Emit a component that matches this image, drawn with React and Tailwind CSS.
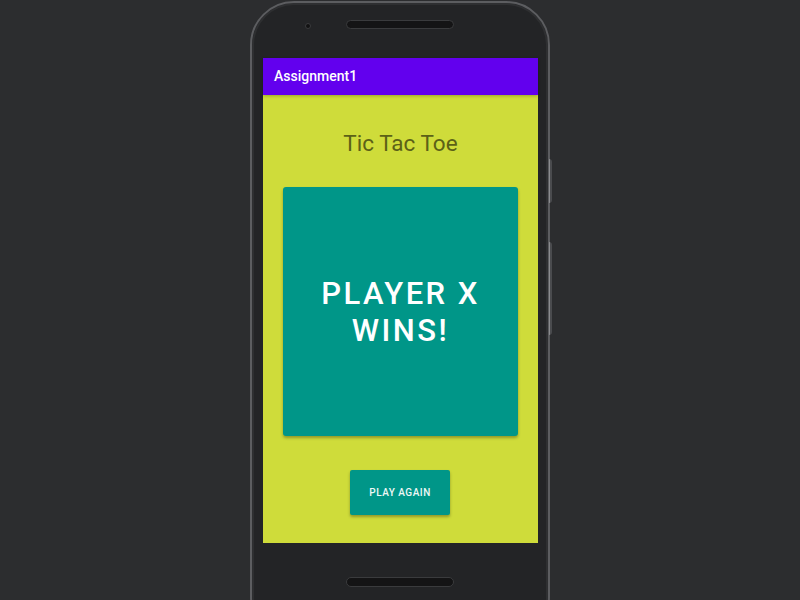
import React from 'react';

const PhoneFrame = ({ children }) => (
  <div className="relative w-[300px] h-[640px] mt-[1px] rounded-[44px] border-2 border-[#5c5d60] bg-[#232426] shadow-[inset_0_0_0_2px_#2e2f31]">
    {/* side buttons */}
    <div className="absolute right-[-4px] top-[156px] w-[3px] h-[44px] rounded-r bg-[#4a4b4e] border-l border-[#8a8b8e]" />
    <div className="absolute right-[-4px] top-[239px] w-[3px] h-[93px] rounded-r bg-[#4a4b4e] border-l border-[#8a8b8e]" />

    <div className="flex flex-col items-center">
      {/* earpiece + camera */}
      <div className="relative h-[55px] w-full flex justify-center items-start pt-[17px]">
        <div className="absolute left-[53px] top-[20px] w-[6px] h-[6px] rounded-full bg-[#121213] border border-[#3a3b3d]" />
        <div className="w-[108px] h-[9px] rounded-full bg-[#141415] border border-[#3a3b3d]" />
      </div>
      {children}
      {/* bottom speaker */}
      <div className="mt-[34px] w-[108px] h-[10px] rounded-full bg-[#141415] border border-[#3a3b3d]" />
    </div>
  </div>
);

export default function App() {
  return (
    <div className="w-[800px] h-[600px] overflow-hidden bg-[#2c2d2f] flex justify-center font-['Roboto',sans-serif]">
      <PhoneFrame>
        <div className="w-[275px] h-[485px] ml-[1px] bg-[#cfdc3a] flex flex-col">
          <div className="h-[37px] bg-[#6200ee] flex items-center px-[11px] shadow-[0_1px_3px_rgba(0,0,0,0.25)]">
            <span className="text-white text-[14px] font-medium">Assignment1</span>
          </div>
          <div className="flex flex-col items-center">
            <h1 className="mt-[33px] text-[22.5px] leading-[30px] text-[#5c6117]">Tic Tac Toe</h1>
            <div className="mt-[29px] w-[235px] h-[249px] rounded-[3px] bg-[#009688] shadow-[0_2px_3px_rgba(0,0,0,0.3)] flex items-center justify-center">
              <p className="text-white text-[31px] leading-[37px] tracking-[0.08em] font-medium text-center">
                PLAYER X<br />WINS!
              </p>
            </div>
            <button className="mt-[34px] ml-[-1px] w-[100px] h-[45px] rounded-[2px] bg-[#009688] shadow-[0_2px_3px_rgba(0,0,0,0.3)] text-[#eef8f6] text-[10px] font-medium tracking-[0.05em]">
              PLAY AGAIN
            </button>
          </div>
        </div>
      </PhoneFrame>
    </div>
  );
}
